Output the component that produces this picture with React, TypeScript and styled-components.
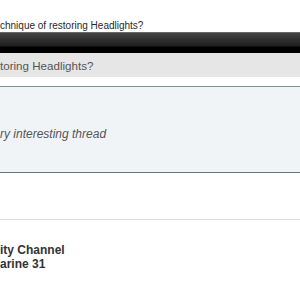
import styled, { createGlobalStyle } from 'styled-components'

const GlobalStyle = createGlobalStyle`
  html, body {
    margin: 0;
    padding: 0;
    background: #fff;
  }
  body {
    font-family: 'Liberation Sans', Arial, sans-serif;
  }
`

const Page = styled.div`
  width: 300px;
  height: 300px;
  overflow: hidden;
  background: #fff;
`

const Breadcrumb = styled.div`
  height: 32px;
  box-sizing: border-box;
  padding-top: 20px;
  font-size: 10px;
  line-height: 12px;
  color: #2a2a2a;
  white-space: nowrap;
`

const DarkBar = styled.div`
  height: 21px;
  background: linear-gradient(
    to bottom,
    #8a8a8a 0px,
    #444 1px,
    #2e2e2e 8px,
    #1e1e1e 14px,
    #000 15px,
    #000 100%
  );
`

const ThreadTitle = styled.div`
  height: 24px;
  background: #e6e6e6;
  font-size: 11.6px;
  line-height: 25px;
  color: #555;
  white-space: nowrap;
`

const PostBox = styled.div`
  margin-top: 9px;
  height: 87px;
  box-sizing: border-box;
  background: #f0f4f7;
  border-top: 1px solid #7f9595;
  border-bottom: 1px solid #607a7a;
  padding-top: 40px;
`

const Message = styled.div`
  font-size: 12px;
  line-height: 14px;
  font-style: italic;
  color: #555;
  white-space: nowrap;
`

const Footer = styled.div`
  margin-top: 46px;
  border-top: 1px solid #dedede;
  padding-top: 23px;
`

const InfoLine = styled.div`
  font-size: 12px;
  line-height: 14px;
  font-weight: bold;
  color: #333;
  white-space: nowrap;
`

export default function App() {
  return (
    <Page>
      <GlobalStyle />
      <Breadcrumb>chnique of restoring Headlights?</Breadcrumb>
      <DarkBar />
      <ThreadTitle>toring Headlights?</ThreadTitle>
      <PostBox>
        <Message>ry interesting thread</Message>
      </PostBox>
      <Footer>
        <InfoLine>ity Channel</InfoLine>
        <InfoLine>arine 31</InfoLine>
      </Footer>
    </Page>
  )
}
